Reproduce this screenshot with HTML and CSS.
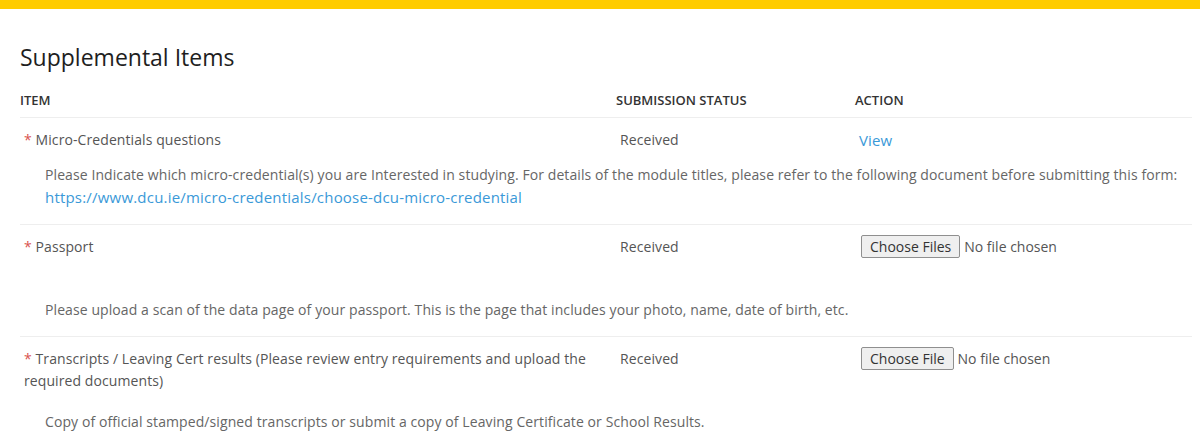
FILE: index.html
```html
<!DOCTYPE html>
<html lang="en">

<head>
    <meta charset="UTF-8">
    <meta name="viewport" content="width=device-width, initial-scale=1.0">
    <title>Supplemental Items</title>
    <link rel="stylesheet" href="styles.css">
</head>

<body>
    <!-- 顶部黄色条 -->
    <div class="topBar"></div>

    <div class="content">
        <h2 class="title">Supplemental Items</h2>

        <!-- 表头 -->
        <div class="row head">
            <div>ITEM</div>
            <div>SUBMISSION STATUS</div>
            <div>ACTION</div>
        </div>

        <div class="item">
            <div class="row">
                <div class="cell"><span class="req">*</span> Micro-Credentials questions</div>
                <div class="cell">Received</div>
                <div class="cell"><a href="#" class="view">View</a></div>
            </div>
            <p class="desc">Please Indicate which micro-credential(s) you are Interested in studying. For details of the module titles, please refer to the following document before submitting this form:<br>
                <a href="#" class="docLink">https://www.dcu.ie/micro-credentials/choose-dcu-micro-credential</a></p>
        </div>

        <div class="item">
            <div class="row">
                <div class="cell"><span class="req">*</span> Passport</div>
                <div class="cell">Received</div>
                <div class="cell upload"><input type="file" multiple></div>
            </div>
            <p class="desc">Please upload a scan of the data page of your passport. This is the page that includes your photo, name, date of birth, etc.</p>
        </div>

        <div class="item">
            <div class="row">
                <div class="cell"><span class="req">*</span> Transcripts / Leaving Cert results (Please review entry requirements and upload the required documents)</div>
                <div class="cell">Received</div>
                <div class="cell upload"><input type="file"></div>
            </div>
            <p class="desc">Copy of official stamped/signed transcripts or submit a copy of Leaving Certificate or School Results.</p>
        </div>
    </div>
</body>

</html>
```

FILE: styles.css
```css
* {
    margin: 0;
    padding: 0;
    box-sizing: border-box;
}

body {
    font-family: "Open Sans", "Noto Sans", sans-serif;
    font-size: 14px;
    letter-spacing: 0.09px;
    color: #555;
    background-color: #fff;
}

.topBar {
    height: 9px;
    background-color: #ffcc00;
}

.content {
    padding: 0 8px 0 20px;
}

.title {
    margin-top: 32px;
    font-size: 23px;
    line-height: 32px;
    font-weight: 400;
    letter-spacing: 0;
    color: #1e1e1e;
}

.row {
    display: grid;
    grid-template-columns: 596px 239px 1fr;
    line-height: 22px;
}

.head {
    margin-top: 17px;
    padding-bottom: 7px;
    font-size: 13px;
    font-weight: 600;
    line-height: 20px;
    letter-spacing: 0;
    color: #333;
    border-bottom: 1px solid #eee;
}

.item {
    padding: 11px 0 15px;
    border-bottom: 1px solid #eee;
}

.cell {
    padding-left: 4px;
}

.cell:first-child {
    padding-right: 20px;
}

.req {
    color: #d9534f;
}

a {
    color: #3a99d8;
    text-decoration: none;
}

.view {
    font-size: 15px;
}

.docLink {
    font-size: 15px;
    letter-spacing: 0.2px;
}

.upload {
    min-height: 51px;
    padding-left: 6px;
}

.upload input {
    margin-top: -1px;
    font-family: "Open Sans", sans-serif;
    font-size: 14px;
    color: #555;
}

.upload input::file-selector-button {
    font-family: "Open Sans", sans-serif;
    font-size: 14px;
    color: #333;
    padding: 1px 8px;
    margin-right: 4px;
    background-color: #efefef;
    border: 1px solid #8f8f8f;
    border-radius: 2px;
}

.desc {
    margin-top: 12px;
    padding-left: 25px;
    line-height: 22px;
    color: #666;
}
```
